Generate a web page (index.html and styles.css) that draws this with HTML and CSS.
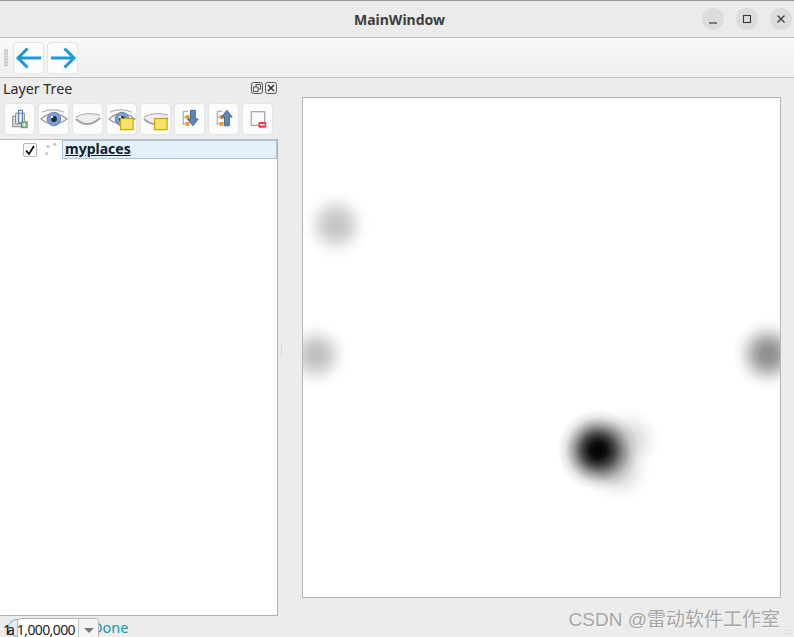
FILE: index.html
```html
<!DOCTYPE html>
<html>
<head>
    <title>MainWindow</title>
    <link rel="stylesheet" href="styles.css">
</head>
<body>
<svg class="sprite">
    <symbol id="eye-open" viewBox="0 0 30 30">
        <path d="M3 8Q14 3 26 8" fill="none" stroke="#b4b4b4" stroke-width="1.2"/>
        <path d="M2 15Q15 4 29 15Q15 25 2 15z" fill="#f6f6f6" stroke="#9c9c9c" stroke-width="1.2"/>
        <circle cx="15.5" cy="15" r="7" fill="#7c9fd0" stroke="#5f80ad"/>
        <circle cx="15.5" cy="15" r="3" fill="#1d2a40"/>
        <circle cx="13.5" cy="13" r="1.2" fill="#fff"/>
    </symbol>
    <symbol id="eye-closed" viewBox="0 0 30 30">
        <path d="M3 13Q14 7 28 11L28 15Q15 23 3 15z" fill="#eeeeee"/>
        <path d="M3 13Q14 7 28 11" fill="none" stroke="#a4a4a4" stroke-width="1"/>
        <path d="M3 15Q15 26 28 14" fill="none" stroke="#a6a6a6" stroke-width="2"/>
    </symbol>
    <symbol id="tree-nodes" viewBox="0 0 30 30">
        <path d="M8.5 7v14M8.5 7h5M8.5 13h3M8.5 20h3" fill="none" stroke="#9a9a9a"/>
        <rect x="11" y="11" width="4" height="4" fill="#f09a2e"/>
        <rect x="11" y="18" width="4" height="4" fill="#f09a2e"/>
    </symbol>
</svg>

<div class="window">
    <header class="titlebar">
        <span class="title">MainWindow</span>
        <div class="wm-buttons">
            <button class="wm-btn"><svg width="12" height="12" viewBox="0 0 12 12"><path d="M2 10h8" stroke="#3a3a3a" stroke-width="1.2"/></svg></button>
            <button class="wm-btn"><svg width="12" height="12" viewBox="0 0 12 12"><rect x="2.5" y="2.5" width="7" height="7" fill="none" stroke="#3a3a3a" stroke-width="1.1"/></svg></button>
            <button class="wm-btn"><svg width="12" height="12" viewBox="0 0 12 12"><path d="M2.5 2.5l7 7M9.5 2.5l-7 7" stroke="#3a3a3a" stroke-width="1.3"/></svg></button>
        </div>
    </header>

    <div class="toolbar">
        <span class="grip"></span>
        <button class="tool-btn">
            <svg width="28" height="28" viewBox="0 0 28 28"><path d="M26 14H3M12.5 4.5L3 14l9.5 9.5" fill="none" stroke="#1b98e0" stroke-width="3"/></svg>
        </button>
        <button class="tool-btn">
            <svg width="28" height="28" viewBox="0 0 28 28"><path d="M2 14h23M15.5 4.5L25 14l-9.5 9.5" fill="none" stroke="#1b98e0" stroke-width="3"/></svg>
        </button>
    </div>

    <main class="content">
        <section class="dock">
            <div class="dock-title">
                <span>Layer Tree</span>
                <span class="dock-icons">
                    <svg width="12" height="12" viewBox="0 0 12 12"><rect x=".5" y=".5" width="11" height="11" rx="2" fill="none" stroke="#555"/><rect x="5" y="2.5" width="4.5" height="4.5" fill="none" stroke="#555"/><rect x="2.5" y="5" width="4.5" height="4.5" fill="#eee" stroke="#555"/></svg>
                    <svg width="12" height="12" viewBox="0 0 12 12"><rect x=".5" y=".5" width="11" height="11" rx="2" fill="none" stroke="#555"/><path d="M3 3l6 6M9 3l-6 6" stroke="#333" stroke-width="1.6"/></svg>
                </span>
            </div>

            <div class="layer-tools">
                <button class="layer-btn">
                    <svg width="30" height="30" viewBox="0 0 30 30"><path d="M8 12h11v11H8z" fill="#ddd" stroke="#808080"/><path d="M11 9h9v11h-9z" fill="#eee" stroke="#808080"/><path d="M14 6h4v13h-4z" fill="none" stroke="#5a7fa8" stroke-width="1.2"/><rect x="17" y="18" width="6" height="6" fill="#7fbf84" stroke="#5a9a5e"/><path d="M20 19v4M18 21h4" stroke="#fff"/></svg>
                </button>
                <button class="layer-btn">
                    <svg width="30" height="30"><use href="#eye-open"/></svg>
                </button>
                <button class="layer-btn">
                    <svg width="30" height="30"><use href="#eye-closed"/></svg>
                </button>
                <button class="layer-btn">
                    <svg width="30" height="30" viewBox="0 0 30 30"><use href="#eye-open" width="30" height="30"/><rect x="14" y="14.5" width="13" height="11.5" fill="#fae36a" stroke="#c7a300" stroke-width="1.2"/></svg>
                </button>
                <button class="layer-btn">
                    <svg width="30" height="30" viewBox="0 0 30 30"><use href="#eye-closed" width="30" height="30"/><rect x="14" y="14.5" width="13" height="11.5" fill="#fae36a" stroke="#c7a300" stroke-width="1.2"/></svg>
                </button>
                <button class="layer-btn">
                    <svg width="30" height="30" viewBox="0 0 30 30"><use href="#tree-nodes" width="30" height="30"/><path d="M16 6h5v9h3l-5.5 7-5.5-7h3z" fill="#5b86b5" stroke="#3d6590"/></svg>
                </button>
                <button class="layer-btn">
                    <svg width="30" height="30" viewBox="0 0 30 30"><use href="#tree-nodes" width="30" height="30"/><path d="M16 22h5v-9h3l-5.5-7-5.5 7h3z" fill="#5b86b5" stroke="#3d6590"/></svg>
                </button>
                <button class="layer-btn">
                    <svg width="30" height="30" viewBox="0 0 30 30"><rect x="8.5" y="7.5" width="14" height="14" fill="#fafafa" stroke="#8c8c8c"/><rect x="16" y="18" width="8" height="6" rx="1" fill="#ee3b4b"/><path d="M17.5 21h5" stroke="#fff" stroke-width="1.4"/></svg>
                </button>
            </div>

            <div class="tree">
                <div class="tree-row">
                    <span class="check">
                        <svg width="12" height="12" viewBox="0 0 12 12"><path d="M2 6.5l3 3.5 5-8" fill="none" stroke="#111" stroke-width="1.8"/></svg>
                    </span>
                    <svg class="point-sym" width="14" height="14" viewBox="0 0 14 14"><circle cx="1.5" cy="10.5" r="1" fill="#fff" stroke="#888" stroke-width=".7"/><circle cx="3" cy="3.5" r="1" fill="#fff" stroke="#888" stroke-width=".7"/><circle cx="10" cy="1.5" r="1" fill="#fff" stroke="#888" stroke-width=".7"/></svg>
                    <span class="layer-name">myplaces</span>
                </div>
            </div>
        </section>

        <div class="splitter"></div>

        <div class="map-wrap">
            <svg class="map" width="479" height="501" viewBox="0 0 479 501">
                <defs>
                    <radialGradient id="blob">
                        <stop offset="0" stop-opacity="1"/>
                        <stop offset=".2" stop-opacity=".94"/>
                        <stop offset=".4" stop-opacity=".7"/>
                        <stop offset=".6" stop-opacity=".36"/>
                        <stop offset=".8" stop-opacity=".1"/>
                        <stop offset="1" stop-opacity="0"/>
                    </radialGradient>
                </defs>
                <rect width="479" height="501" fill="#fff"/>
                <circle cx="34" cy="128" r="35" fill="url(#blob)" opacity=".23"/>
                <circle cx="14" cy="258" r="34" fill="url(#blob)" opacity=".25"/>
                <circle cx="466" cy="257" r="36" fill="url(#blob)" opacity=".44"/>
                <circle cx="327" cy="343" r="34" fill="url(#blob)" opacity=".14"/>
                <circle cx="317" cy="373" r="33" fill="url(#blob)" opacity=".16"/>
                <circle cx="296" cy="353" r="41" fill="url(#blob)"/>
            </svg>
        </div>
    </main>

    <footer class="statusbar">
        <span class="busy-arc"></span>
        <span class="status-glyphs">1a</span>
        <span class="status-msg">Done</span>
        <div class="scale-box">
            <span class="scale-value">1:1,000,000</span>
            <span class="scale-arrow"></span>
        </div>
        <span class="watermark">CSDN @雷动软件工作室</span>
        <span class="size-grip"></span>
    </footer>
</div>
</body>
</html>
```

FILE: styles.css
```css
* { box-sizing: border-box; }
html, body { margin: 0; height: 100%; overflow: hidden; }
body { font-family: "Noto Sans", sans-serif; color: #222; background: #ececec; }
button { padding: 0; cursor: pointer; }
.sprite { position: absolute; width: 0; height: 0; }

.window { width: 794px; height: 637px; display: flex; flex-direction: column; overflow: hidden; }

/* title bar */
.titlebar {
    height: 38px;
    flex: none;
    display: flex;
    align-items: center;
    justify-content: center;
    position: relative;
    background: #ebebeb;
    border-top: 1px solid #9a9a9a;
    border-bottom: 1px solid #bdbdbd;
}
.title { font-size: 14px; font-weight: 700; color: #3d3d3d; margin-left: 5px; }
.wm-buttons { position: absolute; right: 2px; top: 7px; display: flex; gap: 12px; }
.wm-btn {
    width: 22px;
    height: 22px;
    border: none;
    border-radius: 50%;
    background: #dcdcdc;
    display: flex;
    align-items: center;
    justify-content: center;
}

/* navigation toolbar */
.toolbar {
    height: 40px;
    flex: none;
    display: flex;
    align-items: center;
    gap: 3px;
    padding-left: 4px;
    background: linear-gradient(#f9f9f9, #efefef);
    border-bottom: 1px solid #c4c4c4;
}
.grip {
    width: 4px;
    height: 17px;
    margin-right: 2px;
    background-image: radial-gradient(#c4c4c4 .7px, transparent 1px);
    background-size: 2px 3px;
}
.tool-btn, .layer-btn {
    width: 31px;
    height: 32px;
    display: flex;
    align-items: center;
    justify-content: center;
    background: #fcfcfc;
    border: 1px solid #e4e4e4;
    border-radius: 4px;
}

/* main area */
.content { flex: 1; min-height: 0; display: flex; }
.dock { width: 278px; flex: none; display: flex; flex-direction: column; }
.dock-title {
    height: 25px;
    flex: none;
    display: flex;
    align-items: center;
    justify-content: space-between;
    padding: 0 1px 5px 3px;
    font-size: 14.25px;
    color: #2a2a2a;
}
.dock-icons { display: flex; gap: 2px; }
.layer-tools { display: flex; gap: 3px; padding-left: 4px; height: 36px; flex: none; }
.tree {
    flex: 1;
    background: #fff;
    border-top: 1px solid #c0c0c0;
    border-right: 1px solid #b0b0b0;
    border-bottom: 1px solid #b0b0b0;
}
.tree-row { height: 19px; display: flex; align-items: center; }
.check {
    width: 14px;
    height: 14px;
    margin: 0 8px 0 23px;
    display: flex;
    align-items: center;
    justify-content: center;
    background: #fff;
    border: 1px solid #b5b5b5;
    border-radius: 2px;
}
.point-sym { flex: none; margin-right: 3px; }
.layer-name {
    flex: 1;
    height: 19px;
    padding-left: 2px;
    line-height: 16px;
    font-size: 14px;
    font-weight: 700;
    color: #10202c;
    text-decoration: underline;
    background: #e4f1fa;
    border: 1px solid #a9c4d6;
}

.splitter {
    width: 24px;
    flex: none;
    background-image: radial-gradient(#b8b8b8 .7px, transparent 1px);
    background-size: 3px 3px;
    background-repeat: repeat-y;
    background-position: 2px center;
    background-clip: content-box;
    padding: 265px 0 259px;
}

.map-wrap { flex: 1; padding-top: 19px; }
.map { display: block; width: 479px; height: 501px; outline: 1px solid #b4b4b4; outline-offset: -1px; }

/* status bar, its widgets overlap at this window size */
.statusbar { height: 21px; flex: none; position: relative; background: #ececec; font-size: 14px; }
.busy-arc {
    position: absolute;
    left: 8px;
    top: 3px;
    width: 18px;
    height: 18px;
    border: 1px solid #6aa9e0;
    border-radius: 50%;
}
.status-glyphs { position: absolute; left: 3px; top: 4px; font-size: 14px; letter-spacing: -4px; color: #111; }
.status-msg { position: absolute; left: 92px; top: 1px; font-size: 14.5px; color: #0e9aa7; }
.scale-box {
    position: absolute;
    left: 17px;
    top: 2px;
    width: 82px;
    height: 26px;
    display: flex;
    background: #fff;
    border: 1px solid #b5b5b5;
    border-radius: 4px;
    overflow: hidden;
}
.scale-value {
    width: 60px;
    flex: none;
    padding-right: 3px;
    overflow: hidden;
    direction: rtl;
    line-height: 22px;
    letter-spacing: -.6px;
    color: #222;
    white-space: nowrap;
}
.scale-arrow {
    flex: 1;
    background: #f4f4f4;
    border-left: 1px solid #c5c5c5;
    position: relative;
}
.scale-arrow::after {
    content: "";
    position: absolute;
    left: 5px;
    top: 9px;
    border: 5px solid transparent;
    border-top: 5px solid #777;
    border-bottom: 0;
}
.watermark {
    position: absolute;
    right: 14px;
    top: -12px;
    font-family: "Liberation Sans", "Noto Sans CJK SC", sans-serif;
    font-size: 19px;
    color: #a6a6a6;
    text-shadow: 1px 1px 1px #f6f6f6;
    white-space: nowrap;
}
.size-grip {
    position: absolute;
    right: 1px;
    bottom: 1px;
    width: 7px;
    height: 7px;
    background-image: radial-gradient(#bdbdbd .7px, transparent 1px);
    background-size: 3px 3px;
}
```
